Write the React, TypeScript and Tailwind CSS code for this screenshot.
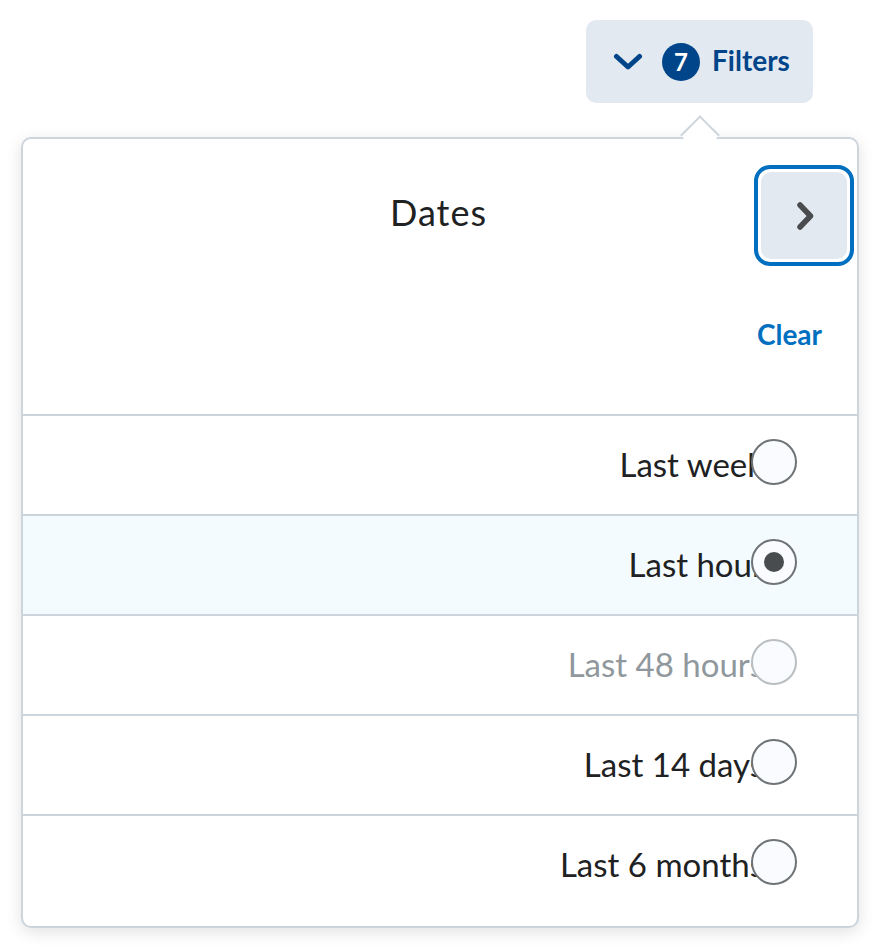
import React from 'react';

type Option = { label: string; selected?: boolean; disabled?: boolean };

const options: Option[] = [
  { label: 'Last week' },
  { label: 'Last hour', selected: true },
  { label: 'Last 48 hours', disabled: true },
  { label: 'Last 14 days' },
  { label: 'Last 6 months' },
];

const Radio: React.FC<{ selected?: boolean; disabled?: boolean }> = ({ selected, disabled }) => (
  <span
    className={`relative flex h-[46px] w-[46px] shrink-0 items-center justify-center rounded-full border-2 bg-[#f9fbff] ${
      disabled ? 'border-[#b9bec1]' : 'border-[#6e7376]'
    }`}
  >
    {selected && <span className="h-[20px] w-[20px] rounded-full bg-[#494c4e]" />}
  </span>
);

const App: React.FC = () => {
  return (
    <div className="relative h-[950px] w-[880px] bg-white font-['Lato','Noto_Sans',sans-serif] text-[#202122]">
      <div className="flex justify-end pr-[67px] pt-[20px]">
        <button className="flex h-[83px] w-[227px] items-center rounded-[10px] bg-[#e3e9f1] pl-[27px] text-[#004489]">
          <svg width="30" height="18" viewBox="0 0 30 18" fill="none">
            <polyline points="3.5,3.5 15,14 26.5,3.5" stroke="#004489" strokeWidth="5" strokeLinecap="round" strokeLinejoin="round" />
          </svg>
          <span className="ml-[19px] flex h-[38px] w-[38px] items-center justify-center rounded-full bg-[#004489] text-[24px] font-bold leading-none text-white">
            7
          </span>
          <span className="-mt-[4px] ml-[12px] text-[28px] font-bold leading-none">Filters</span>
        </button>
      </div>

      <div className="relative ml-[21px] mt-[34px] w-[838px] rounded-[10px] border-2 border-[#cdd5dc] bg-white pb-[12px] shadow-[0_4px_16px_rgba(0,0,0,0.12)]">
        <span className="absolute left-[663px] top-[-18px] h-[28px] w-[28px] rotate-45 border-l-2 border-t-2 border-[#cdd5dc] bg-white" />

        <div className="relative h-[275px] pt-[26px]">
          <div className="grid grid-cols-[1fr_auto_1fr] items-center pr-[3px]">
            <div />
            <h2 className="-mt-[8px] text-[36px] leading-none tracking-[1px]">Dates</h2>
            <div className="flex justify-end">
              <button className="flex h-[101px] w-[100px] items-center justify-center rounded-[16px] border-[4px] border-[#006fbf] bg-white p-[3px]">
                <span className="flex h-full w-full items-center justify-center rounded-[10px] bg-[#e3e9f1]">
                  <svg width="18" height="30" viewBox="0 0 18 30" fill="none" className="ml-[2px]">
                    <polyline points="4,4 14.5,15 4,26" stroke="#494c4e" strokeWidth="5.5" strokeLinecap="round" strokeLinejoin="round" />
                  </svg>
                </span>
              </button>
            </div>
          </div>
          <div className="mt-[54px] flex justify-end pr-[35px]">
            <span className="text-[28px] font-bold leading-none text-[#006fbf]">Clear</span>
          </div>
        </div>

        {options.map((o) => (
          <div
            key={o.label}
            className={`flex h-[100px] items-center justify-end border-t-2 border-[#cdd5dc] pb-[7px] pr-[60px] ${
              o.selected ? 'bg-[#f3fbff]' : ''
            }`}
          >
            <span className={`mt-[5px] text-[33px] leading-none ${o.disabled ? 'text-[#90989d]' : 'text-[#202122]'}`}>{o.label}</span>
            <span className="-ml-[13px]">
              <Radio selected={o.selected} disabled={o.disabled} />
            </span>
          </div>
        ))}
      </div>
    </div>
  );
};

export default App;
